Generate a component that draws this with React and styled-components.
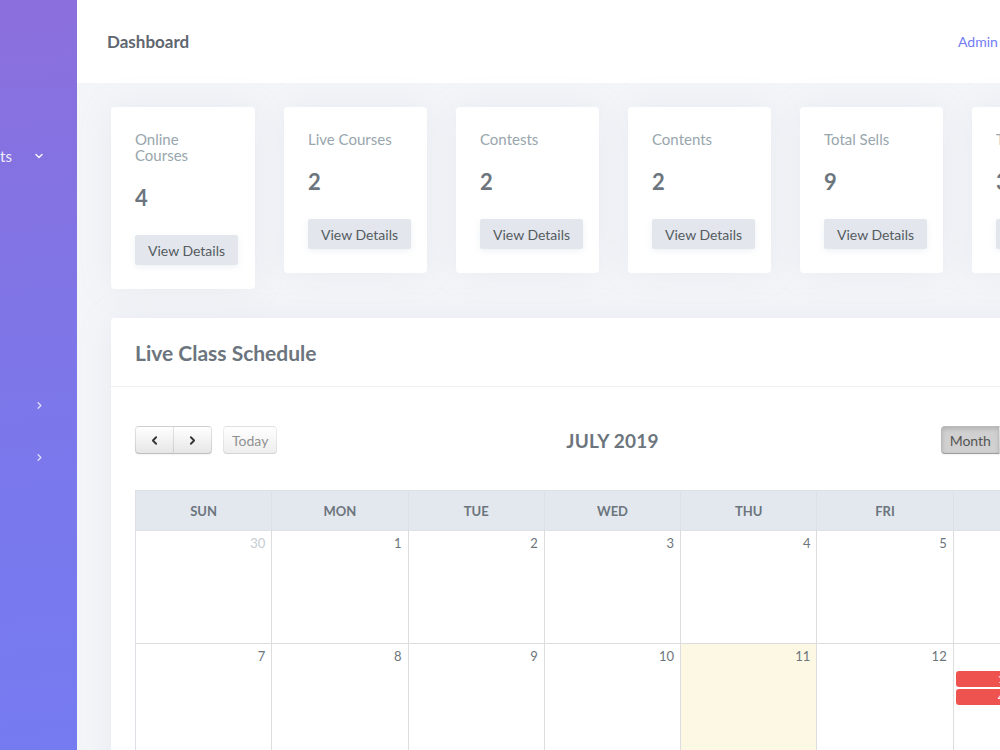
import React from 'react'
import styled, { createGlobalStyle } from 'styled-components'

const GlobalStyle = createGlobalStyle`
  html, body {
    margin: 0;
    padding: 0;
    height: 750px;
    overflow: hidden;
    background: #f3f5f9;
    font-family: Lato, "Open Sans", sans-serif;
  }
`

const stats = [
  { title: 'Online Courses', value: 4, wide: true },
  { title: 'Live Courses', value: 2 },
  { title: 'Contests', value: 2 },
  { title: 'Contents', value: 2 },
  { title: 'Total Sells', value: 9 },
  { title: 'Total Users', value: 3 },
]

const days = ['SUN', 'MON', 'TUE', 'WED', 'THU', 'FRI', 'SAT']

const weeks = [
  [30, 1, 2, 3, 4, 5, 6],
  [7, 8, 9, 10, 11, 12, 13],
  [14, 15, 16, 17, 18, 19, 20],
  [21, 22, 23, 24, 25, 26, 27],
]

function ChevronDown() {
  return (
    <svg width="12" height="12" viewBox="0 0 24 24" fill="none" stroke="currentColor" strokeWidth="3.2" strokeLinecap="round" strokeLinejoin="round">
      <path d="M6 9l6 6 6-6" />
    </svg>
  )
}

function ChevronRight({ size = 12, width = 3 }) {
  return (
    <svg width={size} height={size} viewBox="0 0 24 24" fill="none" stroke="currentColor" strokeWidth={width} strokeLinecap="round" strokeLinejoin="round">
      <path d="M9 6l6 6-6 6" />
    </svg>
  )
}

function ChevronLeft({ size = 12, width = 3 }) {
  return (
    <svg width={size} height={size} viewBox="0 0 24 24" fill="none" stroke="currentColor" strokeWidth={width} strokeLinecap="round" strokeLinejoin="round">
      <path d="M15 6l-6 6 6 6" />
    </svg>
  )
}

export default function App() {
  return (
    <Page>
      <GlobalStyle />
      <Sidebar>
        <SideInner>
          <SideItem $top={136}>
            <SideLabel $right>Contests</SideLabel>
            <ChevronDown />
          </SideItem>
          <SideItem $top={209}>
            <SideLabel>Users</SideLabel>
            <Arrow>
              <ChevronRight size={11} width={3} />
            </Arrow>
          </SideItem>
          <SideItem $top={12}>
            <SideLabel>Settings</SideLabel>
            <Arrow>
              <ChevronRight size={11} width={3} />
            </Arrow>
          </SideItem>
        </SideInner>
      </Sidebar>

      <Main>
        <Topbar>
          <PageTitle>Dashboard</PageTitle>
          <AdminLink>Admin User</AdminLink>
        </Topbar>

        <Content>
          <CardRow>
            {stats.map((s) => (
              <StatCard key={s.title} $wide={s.wide}>
                <StatTitle>{s.title}</StatTitle>
                <StatValue>{s.value}</StatValue>
                <DetailsButton>View Details</DetailsButton>
              </StatCard>
            ))}
          </CardRow>

          <Panel>
            <PanelHead>
              <PanelTitle>Live Class Schedule</PanelTitle>
            </PanelHead>
            <PanelBody>
              <Toolbar>
                <ToolGroup>
                  <NavGroup>
                    <CalButton>
                      <ChevronLeft size={13} width={3.4} />
                    </CalButton>
                    <CalButton>
                      <ChevronRight size={13} width={3.4} />
                    </CalButton>
                  </NavGroup>
                  <CalButton $disabled>Today</CalButton>
                </ToolGroup>
                <MonthTitle>JULY 2019</MonthTitle>
                <ToolGroup $end>
                  <ViewGroup>
                    <CalButton $active>Month</CalButton>
                    <CalButton>Week</CalButton>
                    <CalButton>Day</CalButton>
                  </ViewGroup>
                </ToolGroup>
              </Toolbar>

              <CalGrid>
                {days.map((d) => (
                  <DayHead key={d}>{d}</DayHead>
                ))}
                {weeks.map((w, wi) =>
                  w.map((n, di) => (
                    <DayCell key={`${wi}-${di}`} $today={n === 11 && wi === 1}>
                      <DayNum $other={wi === 0 && di === 0}>{n}</DayNum>
                      {wi === 1 && di === 6 && (
                        <>
                          <Event>10:00a Live Class</Event>
                          <Event>4:00p Live Class</Event>
                        </>
                      )}
                    </DayCell>
                  ))
                )}
              </CalGrid>
            </PanelBody>
          </Panel>
        </Content>
      </Main>
    </Page>
  )
}

const Page = styled.div`
  display: flex;
  width: 1148px;
  min-height: 750px;
`

const Sidebar = styled.aside`
  flex: 0 0 77px;
  width: 77px;
  min-height: 750px;
  overflow: hidden;
  background: linear-gradient(175deg, #8b6fdc 0%, #7a78ec 45%, #727df5 100%);
`

const SideInner = styled.nav`
  width: 250px;
  margin-left: -173px;
  display: flex;
  flex-direction: column;
`

const SideItem = styled.div`
  display: flex;
  align-items: center;
  gap: 21px;
  height: 40px;
  margin-top: ${(p) => p.$top}px;
  padding: 0 32px 0 24px;
  color: rgba(255, 255, 255, 0.9);
  font-size: 15px;
`

const SideLabel = styled.span`
  flex: 1;
  text-align: ${(p) => (p.$right ? 'right' : 'left')};
`

const Arrow = styled.span`
  display: flex;
  color: rgba(255, 255, 255, 0.75);
`

const Main = styled.div`
  flex: 1;
  min-width: 0;
  display: flex;
  flex-direction: column;
  background: #f3f5f9;
`

const Topbar = styled.header`
  height: 83px;
  background: #fff;
  display: flex;
  align-items: center;
  justify-content: space-between;
  padding: 0 30px;
`

const PageTitle = styled.h1`
  margin: 0;
  font-size: 17px;
  font-weight: 700;
  color: #5f6770;
`

const AdminLink = styled.a`
  font-size: 14px;
  color: #727cf5;
  margin-right: 88px;
`

const Content = styled.div`
  padding: 24px 34px;
  display: flex;
  flex-direction: column;
  gap: 29px;
`

const CardRow = styled.div`
  display: flex;
  align-items: flex-start;
  gap: 29px;
`

const StatCard = styled.div`
  flex: 0 0 ${(p) => (p.$wide ? 144 : 143)}px;
  box-sizing: border-box;
  background: #fff;
  border-radius: 4px;
  padding: 23px 16px 24px 24px;
  box-shadow: 0 0 35px 0 rgba(154, 161, 171, 0.12);
`

const StatTitle = styled.div`
  max-width: 90px;
  font-size: 15px;
  line-height: 16px;
  color: #98a6ad;
  padding-top: 1px;
`

const StatValue = styled.div`
  margin-top: 23px;
  font-size: 22px;
  line-height: 24px;
  font-weight: 700;
  color: #6c757d;
`

const DetailsButton = styled.button`
  margin-top: 25px;
  height: 30px;
  width: 103px;
  border: none;
  border-radius: 2px;
  background: #e3e7ed;
  color: #555b62;
  font-family: inherit;
  font-size: 14px;
  white-space: nowrap;
  padding: 0;
  box-shadow: 0 2px 6px 0 rgba(227, 231, 237, 0.6);
`

const Panel = styled.section`
  background: #fff;
  border-radius: 4px;
  box-shadow: 0 0 35px 0 rgba(154, 161, 171, 0.12);
`

const PanelHead = styled.div`
  height: 68px;
  display: flex;
  align-items: center;
  padding: 0 24px;
  border-bottom: 1px solid #eef0f4;
`

const PanelTitle = styled.h2`
  margin: 0;
  font-size: 21px;
  font-weight: 700;
  color: #6c757d;
`

const PanelBody = styled.div`
  padding: 39px 24px 24px;
`

const Toolbar = styled.div`
  display: grid;
  grid-template-columns: 1fr auto 1fr;
  align-items: center;
  margin-bottom: 36px;
`

const ToolGroup = styled.div`
  display: flex;
  gap: 11px;
  justify-content: ${(p) => (p.$end ? 'flex-end' : 'flex-start')};
`

const NavGroup = styled.div`
  display: flex;
`

const ViewGroup = styled.div`
  display: flex;
  margin-right: -4px;
`

const CalButton = styled.button`
  height: 28px;
  min-width: 39px;
  padding: 0 8px;
  display: flex;
  align-items: center;
  justify-content: center;
  font-family: inherit;
  font-size: 14px;
  color: #333;
  border: 1px solid;
  border-color: rgba(0, 0, 0, 0.1) rgba(0, 0, 0, 0.1) rgba(0, 0, 0, 0.25);
  background: linear-gradient(#ffffff, #e6e6e6);
  box-shadow: inset 0 1px 0 rgba(255, 255, 255, 0.2), 0 1px 2px rgba(0, 0, 0, 0.05);
  border-radius: 0;
  & + & {
    margin-left: -1px;
  }
  &:first-child {
    border-top-left-radius: 4px;
    border-bottom-left-radius: 4px;
  }
  &:last-child {
    border-top-right-radius: 4px;
    border-bottom-right-radius: 4px;
  }
  ${(p) =>
    p.$disabled &&
    `
    opacity: 0.65;
    box-shadow: none;
    color: #555;
    border-radius: 4px;
  `}
  ${(p) =>
    p.$active &&
    `
    background: #d0d0d0;
    box-shadow: inset 0 2px 4px rgba(0, 0, 0, 0.15), 0 1px 2px rgba(0, 0, 0, 0.05);
    color: #555;
  `}
`

const MonthTitle = styled.h2`
  margin: 0;
  font-size: 19px;
  font-weight: 700;
  color: #6c757d;
  letter-spacing: 0.2px;
`

const CalGrid = styled.div`
  display: grid;
  grid-template-columns: repeat(7, minmax(0, 1fr));
  border-top: 1px solid #dde1e6;
  border-left: 1px solid #dde1e6;
`

const DayHead = styled.div`
  height: 39px;
  display: flex;
  align-items: center;
  justify-content: center;
  background: #e3e8ee;
  color: #6c757d;
  font-size: 13px;
  font-weight: 700;
  border-right: 1px solid #dde1e6;
  border-bottom: 1px solid #dde1e6;
`

const DayCell = styled.div`
  box-sizing: border-box;
  height: 113px;
  padding: 4px 6px 0 2px;
  background: ${(p) => (p.$today ? '#fcf8e3' : '#fff')};
  border-right: 1px solid #dddddd;
  border-bottom: 1px solid #dddddd;
  display: flex;
  flex-direction: column;
  gap: 2px;
  overflow: hidden;
`

const DayNum = styled.div`
  text-align: right;
  font-size: 13px;
  line-height: 16px;
  color: ${(p) => (p.$other ? '#c7ccd1' : '#6c757d')};
  margin-bottom: 5px;
`

const Event = styled.div`
  background: #ef5350;
  color: #fff;
  font-size: 12px;
  line-height: 16px;
  border-radius: 3px;
  padding: 0 4px 0 42px;
  white-space: nowrap;
`
